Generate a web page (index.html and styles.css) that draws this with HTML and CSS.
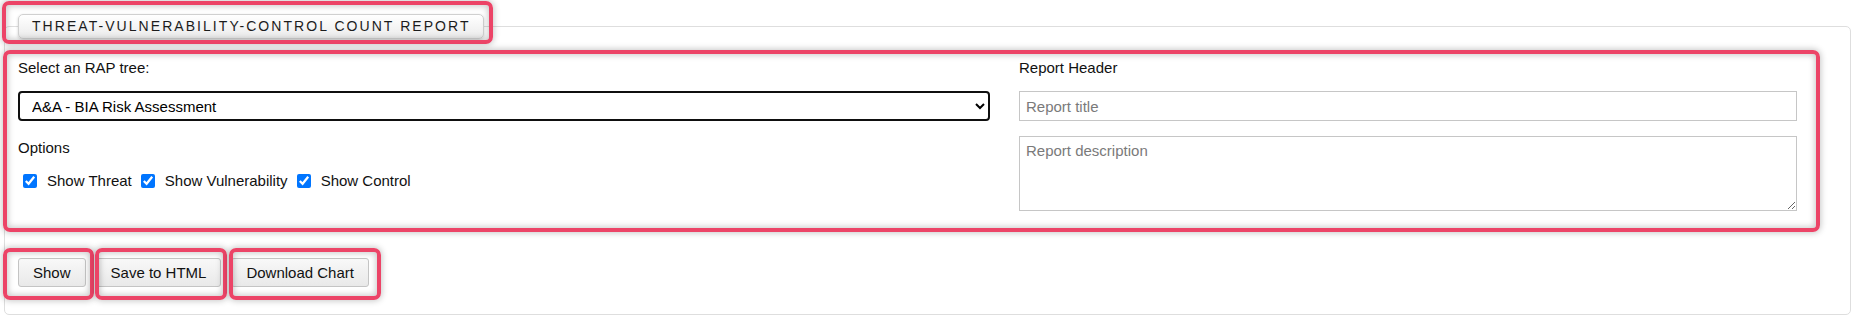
FILE: index.html
```html
<!DOCTYPE html>
<html lang="en">
<head>
<meta charset="utf-8">
<title>Threat-Vulnerability-Control Count Report</title>
<link rel="stylesheet" href="styles.css">
</head>
<body>
<fieldset class="report">
  <legend class="report-legend">THREAT-VULNERABILITY-CONTROL COUNT REPORT</legend>
  <div class="form-row">
    <div class="col-left">
      <div class="field-label">Select an RAP tree:</div>
      <select class="tree-select">
        <option>A&amp;A - BIA Risk Assessment</option>
      </select>
      <div class="field-label options-label">Options</div>
      <div class="checks">
        <label class="check"><input type="checkbox" checked><span>Show Threat</span></label>
        <label class="check"><input type="checkbox" checked><span>Show Vulnerability</span></label>
        <label class="check"><input type="checkbox" checked><span>Show Control</span></label>
      </div>
    </div>
    <div class="col-right">
      <div class="field-label">Report Header</div>
      <input class="text-input" type="text" placeholder="Report title">
      <textarea class="text-area" placeholder="Report description"></textarea>
    </div>
  </div>
  <div class="actions">
    <button class="btn">Show</button>
    <button class="btn">Save to HTML</button>
    <button class="btn">Download Chart</button>
  </div>
</fieldset>

<div class="ann ann-legend"></div>
<div class="ann ann-panel"></div>
<div class="ann ann-show"></div>
<div class="ann ann-save"></div>
<div class="ann ann-download"></div>
</body>
</html>
```

FILE: styles.css
```css
html, body {
  margin: 0;
  padding: 0;
  background: #fff;
}
body {
  font-family: "Liberation Sans", Arial, sans-serif;
  font-size: 15px;
  line-height: 21px;
  color: #111;
  width: 1857px;
  height: 322px;
  overflow: hidden;
  position: relative;
}

.report {
  margin: 14px 6px 8px 4px;
  padding: 18px 13px 27px 13px;
  border: 1px solid #dedede;
  border-radius: 5px;
  min-inline-size: 0;
}

.report-legend {
  padding: 3px 12px 4px 13px;
  margin: 0;
  font-size: 14px;
  line-height: 16px;
  letter-spacing: 2.05px;
  color: #1c1c1c;
  border: 1px solid #d0d0d0;
  border-radius: 5px;
  background: linear-gradient(#ffffff, #ebebeb);
  box-shadow: 0 1px 3px rgba(0, 0, 0, 0.18);
}

.form-row {
  display: grid;
  grid-template-columns: 972px 778px;
  column-gap: 29px;
}

.col-left, .col-right {
  display: flex;
  flex-direction: column;
}

.field-label {
  height: 21px;
}

.tree-select {
  margin-top: 13px;
  height: 30px;
  width: 100%;
  box-sizing: border-box;
  border: 2px solid #0f0f0f;
  border-radius: 4px;
  background: #fff;
  font-family: inherit;
  font-size: 15px;
  color: #000;
  padding: 0 0 0 8px;
}

.options-label {
  margin-top: 16px;
}

.checks {
  margin-top: 12px;
  display: flex;
  height: 21px;
  align-items: center;
}

.check {
  display: inline-flex;
  align-items: center;
  margin-right: 4px;
}

.check input {
  width: 14px;
  height: 14px;
  margin: 0 10px 0 5px;
  accent-color: #0075ff;
}

.text-input {
  margin-top: 13px;
  height: 30px;
  box-sizing: border-box;
  border: 1px solid #c6c6c6;
  border-radius: 0;
  padding: 0 6px;
  font-family: inherit;
  font-size: 15px;
  outline: none;
}

.text-area {
  margin-top: 15px;
  height: 75px;
  box-sizing: border-box;
  border: 1px solid #c6c6c6;
  border-radius: 0;
  padding: 4px 6px;
  font-family: inherit;
  font-size: 15px;
  line-height: 19px;
  resize: vertical;
  outline: none;
}

.text-input::placeholder,
.text-area::placeholder {
  color: #7a7a7a;
}

.actions {
  margin-top: 47px;
  display: flex;
  gap: 10px;
}

.btn {
  height: 29px;
  box-sizing: border-box;
  padding: 0 14px;
  border: 1px solid #c4c4c4;
  border-radius: 3px;
  background: linear-gradient(#f8f8f8, #e9e9e9);
  font-family: inherit;
  font-size: 15px;
  color: #111;
}

/* annotation highlight boxes drawn over the screenshot */
.ann {
  position: absolute;
  box-sizing: border-box;
  border: 4px solid #ec4467;
  border-radius: 7px;
  box-shadow: 0 0 6px 1px rgba(0, 0, 0, 0.22), inset 0 0 6px 1px rgba(0, 0, 0, 0.22);
  pointer-events: none;
}
.ann-legend {
  left: 2px;
  top: 1px;
  width: 491px;
  height: 43px;
}
.ann-panel {
  left: 3px;
  top: 50px;
  width: 1817px;
  height: 182px;
}
.ann-show {
  left: 3px;
  top: 248px;
  width: 91px;
  height: 52px;
}
.ann-save {
  left: 95px;
  top: 248px;
  width: 132px;
  height: 52px;
}
.ann-download {
  left: 229px;
  top: 248px;
  width: 152px;
  height: 52px;
}
```
